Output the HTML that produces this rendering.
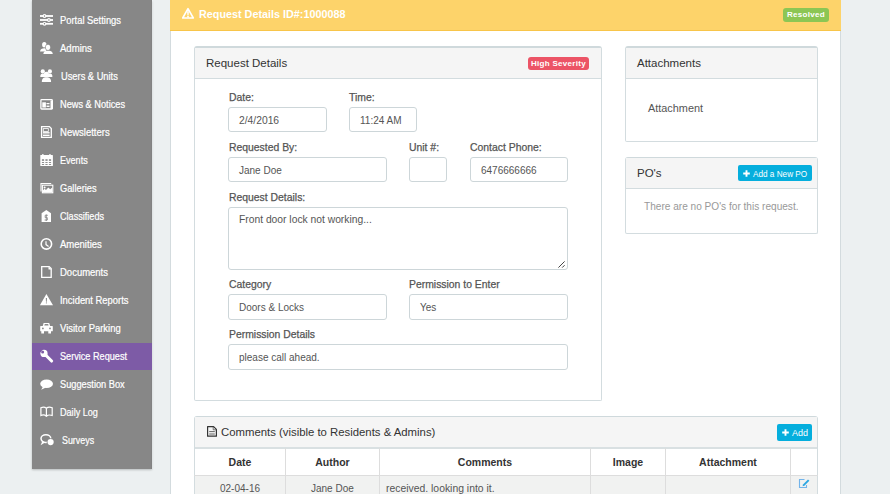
<!DOCTYPE html>
<html><head><meta charset="utf-8">
<style>
*{box-sizing:border-box;margin:0;padding:0}
html,body{width:890px;height:494px;overflow:hidden;background:#ecf0f1;font-family:"Liberation Sans",sans-serif;position:relative}
.sb{position:absolute;left:32px;top:0;width:120px;height:469px;background:#878787;box-shadow:0 1px 2px rgba(0,0,0,.22),1px 0 0 #f3f7f8,inset -1px 0 0 #828282}
.sb .ic{position:absolute;left:4px}
.sb .tx{position:absolute;left:28px;color:#fff;font-size:9.5px;line-height:12px;white-space:nowrap;-webkit-text-stroke:.2px #fff;transform:scaleY(1.08);transform-origin:0 79%}
.sb .act{position:absolute;left:0;width:120px;height:27px;background:#7d5ba6}
.main{position:absolute;left:170px;top:0;width:671px;height:494px;background:#fff;border-left:1px solid #d3dbde;border-right:1px solid #d3dbde}
.hdr{position:absolute;left:-1px;top:0;width:671px;height:31px;background:#fdd36a;border-bottom:1px solid #f8c54a}
.hdr .t{position:absolute;left:29px;top:6.5px;color:#fff;font-size:10.8px;font-weight:bold;line-height:14px;white-space:nowrap}
.badge{position:absolute;color:#fff;font-weight:bold;font-size:8px;letter-spacing:.3px;line-height:14px;text-align:center;border-radius:3px}
.panel{position:absolute;background:#fff;border:1px solid #d3dcdf;border-top:2px solid #cfd9dc;border-radius:3px 3px 2px 2px}
.ph{position:absolute;left:0;top:0;right:0;height:31px;background:#f5f5f5;border-bottom:1px solid #d3dcdf}
.ph .t{position:absolute;left:11px;top:9px;font-size:11.5px;color:#333;line-height:13px;white-space:nowrap}
.lbl{position:absolute;font-size:10.4px;color:#555;line-height:11px;white-space:nowrap;-webkit-text-stroke:.25px #555}
.inp{position:absolute;border:1px solid #cdd6d9;border-radius:3px;background:#fff;height:25px;font-size:10px;color:#555;line-height:23px;padding-left:10px;padding-top:1px;white-space:nowrap}
.btn{position:absolute;background:#05aedd;color:#fff;border-radius:2px;font-size:8.2px;line-height:17px;white-space:nowrap}
table{position:absolute;border-collapse:collapse}
td,th{border:1px solid #dde3e5;font-size:9.5px;color:#333;white-space:nowrap}
.th{position:absolute;height:28px;border-bottom:1px solid #dddddd;font-size:10.5px;font-weight:bold;color:#333;text-align:center;line-height:28px}
.trow{position:absolute;height:40px;background:#f1f2f1;border-top:1px solid #dddddd}
.vl{position:absolute;width:1px;height:60px;background:#dddddd}
.td{position:absolute;font-size:9.5px;color:#555;line-height:12px;white-space:nowrap}

</style></head><body>
<div class="sb">
<svg class="ic" style="top:10px" width="22" height="22" viewBox="0 0 22 22"><g stroke="#fff" stroke-width="1.8"><line x1="4" y1="6" x2="17" y2="6"/><line x1="4" y1="10" x2="17" y2="10"/><line x1="4" y1="13.8" x2="17" y2="13.8"/></g>
<g fill="#fff"><circle cx="8.5" cy="6" r="1.9"/><circle cx="12.9" cy="10" r="1.9"/><circle cx="8.5" cy="13.8" r="1.9"/></g>
<g fill="#777"><circle cx="8.5" cy="6" r=".7"/><circle cx="12.9" cy="10" r=".7"/><circle cx="8.5" cy="13.8" r=".7"/></g></svg>
<span class="tx" style="top:15px;left:28px;font-size:10px;transform:scale(0.938,1)">Portal Settings</span>
<svg class="ic" style="top:38px" width="22" height="22" viewBox="0 0 22 22"><g fill="#fff"><ellipse cx="8.3" cy="6.8" rx="2.2" ry="2.7"/><path d="M4 13.6 C4.3 11 6 10.2 8.3 10.2 C9.5 10.2 10.5 10.6 11 11.2 L9.5 13.6Z"/>
<ellipse cx="12" cy="9.3" rx="2.4" ry="2.9"/><path d="M7.3 15.9 C7.6 13.3 9.5 12.4 12 12.4 C14.5 12.4 16.4 13.3 16.8 15.9Z"/></g>
<g fill="none" stroke="#878787" stroke-width=".6"><ellipse cx="12" cy="9.3" rx="2.7" ry="3.2"/></g></svg>
<span class="tx" style="top:43px;left:28px;font-size:10px;transform:scale(0.955,1)">Admins</span>
<svg class="ic" style="top:66px" width="22" height="22" viewBox="0 0 22 22"><g fill="#fff"><circle cx="6.8" cy="5.4" r="2.1"/><circle cx="13.9" cy="5.4" r="2.1"/>
<path d="M4.3 11 C4.3 8.5 5.2 7.6 6.8 7.6 C8.4 7.6 9.3 8.5 9.3 11Z"/><path d="M11.4 11 C11.4 8.5 12.3 7.6 13.9 7.6 C15.5 7.6 16.4 8.5 16.4 11Z"/>
<circle cx="10.4" cy="8.4" r="2.6"/><path d="M5.8 16 C5.8 12.3 7.5 11.2 10.4 11.2 C13.3 11.2 15.1 12.3 15.1 16Z"/></g></svg>
<span class="tx" style="top:71px;left:29px;font-size:10px;transform:scale(0.930,1)">Users &amp; Units</span>
<svg class="ic" style="top:94px" width="22" height="22" viewBox="0 0 22 22"><g fill="none" stroke="#fff" stroke-width="1.3"><rect x="4.9" y="5.6" width="11.4" height="9.4" rx=".8"/></g>
<g fill="#fff"><rect x="14.5" y="6.5" width="2.4" height="8.6"/><rect x="6.3" y="8.3" width="3.6" height="5.2"/><rect x="10.5" y="9" width="3" height="1.2"/><rect x="10.5" y="11.6" width="3" height="1.4"/></g></svg>
<span class="tx" style="top:99px;left:28px;font-size:10px;transform:scale(0.922,1)">News &amp; Notices</span>
<svg class="ic" style="top:122px" width="22" height="22" viewBox="0 0 22 22"><g fill="none" stroke="#fff" stroke-width="1.3"><path d="M5.6 4.6 H13.4 L15.3 6.6 V15.4 H5.6Z"/><rect x="7.3" y="6.6" width="5" height="2.8" stroke-width=".8"/></g>
<g fill="#fff"><rect x="7" y="10.1" width="6.6" height="1.4"/><rect x="7" y="12.6" width="6.6" height="1.4"/></g></svg>
<span class="tx" style="top:127px;left:28px;font-size:10px;transform:scale(0.952,1)">Newsletters</span>
<svg class="ic" style="top:150px" width="22" height="22" viewBox="0 0 22 22"><g fill="#fff"><rect x="4.3" y="5" width="12.6" height="11" rx=".6"/><rect x="6.2" y="4" width="1.3" height="2"/><rect x="13.3" y="4" width="1.3" height="2"/></g>
<g fill="#8f8f8f"><rect x="5.9" y="9.2" width="2.2" height="1.7"/><rect x="9.4" y="9.2" width="2.2" height="1.7"/><rect x="12.9" y="9.2" width="2.2" height="1.7"/>
<rect x="5.9" y="12" width="2.2" height="1"/><rect x="9.4" y="12" width="2.2" height="1"/><rect x="12.9" y="12" width="2.2" height="1"/>
<rect x="5.9" y="14" width="2.2" height="1"/><rect x="9.4" y="14" width="2.2" height="1"/><rect x="12.9" y="14" width="2.2" height="1"/></g></svg>
<span class="tx" style="top:155px;left:28px;font-size:10px;transform:scale(0.905,1)">Events</span>
<svg class="ic" style="top:178px" width="22" height="22" viewBox="0 0 22 22"><g fill="none" stroke="#fff" stroke-width="1.1"><path d="M5 13.5 V5.5 H15.2"/><rect x="6.4" y="7.2" width="10.4" height="7.6"/></g>
<g fill="#fff"><circle cx="8.6" cy="9.4" r="1"/><path d="M6.8 14.5 L6.8 12.5 L8.5 10.8 L10 12 L12.3 9.5 L14.2 11.3 L16.3 9.5 V14.5Z"/></g></svg>
<span class="tx" style="top:183px;left:28px;font-size:10px;transform:scale(0.927,1)">Galleries</span>
<svg class="ic" style="top:206px" width="22" height="22" viewBox="0 0 22 22"><g fill="#fff"><path d="M5.6 15.9 V7.2 L10.3 3.9 L15 7.2 V15.9Z"/></g>
<g fill="none" stroke="#8a8a8a" stroke-width=".9"><path d="M11.8 9.3 H9.2 V11.6 H11.3 V14 H8.6"/><path d="M10.3 8.4 V15"/></g></svg>
<span class="tx" style="top:211px;left:28px;font-size:10px;transform:scale(0.911,1)">Classifieds</span>
<svg class="ic" style="top:234px" width="22" height="22" viewBox="0 0 22 22"><g fill="none" stroke="#fff"><circle cx="10.4" cy="9.9" r="5.2" stroke-width="1.6"/><path d="M10 7.2 V10.6 L12.6 12.4" stroke-width="1.2"/></g></svg>
<span class="tx" style="top:239px;left:28px;font-size:10px;transform:scale(0.952,1)">Amenities</span>
<svg class="ic" style="top:262px" width="22" height="22" viewBox="0 0 22 22"><g fill="none" stroke="#fff" stroke-width="1.3"><path d="M5.7 4.6 H13.2 L15.2 6.6 V15.3 H5.7Z"/></g><path d="M12.5 4.5 L15.5 7.5 L12.5 7.5Z" fill="#fff"/></svg>
<span class="tx" style="top:267px;left:28px;font-size:10px;transform:scale(0.949,1)">Documents</span>
<svg class="ic" style="top:290px" width="22" height="22" viewBox="0 0 22 22"><path d="M10.4 4 L17 15.3 H3.9Z" fill="#fff"/><g fill="#8a8a8a"><path d="M9.8 8 H11 L10.8 11.8 H10Z"/><rect x="9.9" y="12.4" width="1" height="1"/></g></svg>
<span class="tx" style="top:295px;left:28px;font-size:10px;transform:scale(0.941,1)">Incident Reports</span>
<svg class="ic" style="top:318px" width="22" height="22" viewBox="0 0 22 22"><g fill="#fff"><path d="M6.7 8.2 L7.6 5 H13.2 L14.2 8.2Z"/><rect x="4.2" y="8" width="12.6" height="5.3" rx=".6"/><rect x="5.3" y="13" width="2.7" height="2.5"/><rect x="12.3" y="13" width="2.7" height="2.5"/></g>
<g fill="#8a8a8a"><path d="M8.3 7.6 L8.8 6 H12.1 L12.6 7.6Z"/><circle cx="6.9" cy="10.4" r=".9"/><circle cx="14" cy="10.4" r=".9"/></g></svg>
<span class="tx" style="top:323px;left:28px;font-size:10px;transform:scale(0.944,1)">Visitor Parking</span>
<div class="act" style="top:343px"></div>
<svg class="ic" style="top:346px" width="22" height="22" viewBox="0 0 22 22"><g fill="#fff"><circle cx="8" cy="7.4" r="3.6"/></g><path d="M9.6 9 L15.6 15" stroke="#fff" stroke-width="3.1" stroke-linecap="round"/><g fill="#7d5ba6"><circle cx="6.6" cy="6" r="1.5"/><path d="M6 4.2 L4.6 2.6 L2.6 4.6 L4.4 6.2Z"/></g></svg>
<span class="tx" style="top:351px;left:28px;font-size:10px;transform:scale(0.913,1)">Service Request</span>
<svg class="ic" style="top:374px" width="22" height="22" viewBox="0 0 22 22"><g fill="#fff"><ellipse cx="10.6" cy="9.8" rx="6.4" ry="4.3"/><path d="M7 12.5 L5.2 15.7 L10 13.5Z"/></g></svg>
<span class="tx" style="top:379px;left:28px;font-size:10px;transform:scale(0.924,1)">Suggestion Box</span>
<svg class="ic" style="top:402px" width="22" height="22" viewBox="0 0 22 22"><g fill="none" stroke="#fff" stroke-width="1.2"><path d="M4.9 5.7 C6.8 4.8 9 5 10.4 6.2 C11.8 5 14 4.8 16.2 5.7 V13.5 C14 12.7 11.8 13 10.4 14.2 C9 13 6.8 12.7 4.9 13.5Z"/><path d="M10.4 6.2 V14.2"/></g></svg>
<span class="tx" style="top:407px;left:28px;font-size:10px;transform:scale(0.909,1)">Daily Log</span>
<svg class="ic" style="top:430px" width="22" height="22" viewBox="0 0 22 22"><g fill="none" stroke="#fff" stroke-width="1.5"><ellipse cx="9.9" cy="8.6" rx="4.9" ry="3.9"/></g><path d="M6.2 11.4 L4.6 15.2 L9 12.6Z" fill="#fff"/>
<circle cx="14.6" cy="12.1" r="3.9" fill="#878787"/><circle cx="14.6" cy="12.1" r="3.1" fill="#fff"/></svg>
<span class="tx" style="top:435px;left:30px;font-size:10px;transform:scale(0.889,1)">Surveys</span>
</div>
<div class="main">
  <div class="hdr">
    <svg style="position:absolute;left:12px;top:7px" width="13" height="13" viewBox="0 0 13 13"><path d="M6 1.6 L11.3 11 H0.7Z" fill="none" stroke="#fff" stroke-width="1.6" stroke-linejoin="round"/><path d="M5.1 4.3 H6.9 L6.6 8.4 H5.4Z" fill="#fff"/><rect x="5.2" y="9" width="1.6" height="1.4" fill="#fff"/></svg>
    <span class="t">Request Details ID#:1000088</span>
    <span class="badge" style="left:613px;top:8px;width:46px;height:14px;line-height:14px;background:#8cc654">Resolved</span>
  </div>
  <div class="panel" style="left:23px;top:46px;width:408px;height:355px">
    <div class="ph"><span class="t">Request Details</span>
      <span class="badge" style="left:333px;top:9px;width:61px;height:13px;line-height:13px;background:#ec5466">High Severity</span>
    </div>
  </div>
<span class="lbl" style="left:58px;top:92px;">Date:</span>
<span class="lbl" style="left:178px;top:92px;">Time:</span>
<div class="inp" style="left:57px;top:107px;width:99px;height:25px"><span style="font-size:10.3px">2/4/2016</span></div>
<div class="inp" style="left:178px;top:107px;width:68px;height:25px">11:24 AM</div>
<span class="lbl" style="left:58px;top:142px;">Requested By:</span>
<span class="lbl" style="left:238px;top:142px;">Unit #:</span>
<span class="lbl" style="left:299px;top:142px;">Contact Phone:</span>
<div class="inp" style="left:57px;top:157px;width:159px;height:25px">Jane Doe</div>
<div class="inp" style="left:238px;top:157px;width:38px;height:25px"></div>
<div class="inp" style="left:299px;top:157px;width:98px;height:25px">6476666666</div>
<span class="lbl" style="left:58px;top:192px;">Request Details:</span>
<div class="inp" style="left:57px;top:207px;width:340px;height:63px;line-height:14px;padding-top:5px;font-size:10.3px">Front door lock not working...<svg style="position:absolute;right:1px;bottom:1px" width="8" height="8" viewBox="0 0 8 8"><path d="M0.4 7.6 L6.6 1.4 M4.2 7.6 L6.6 5.2" stroke="#444" stroke-width="1"/></svg></div>
<span class="lbl" style="left:58px;top:279px;">Category</span>
<span class="lbl" style="left:238px;top:279px;">Permission to Enter</span>
<div class="inp" style="left:57px;top:294px;width:159px;height:26px">Doors &amp; Locks</div>
<div class="inp" style="left:238px;top:294px;width:159px;height:26px">Yes</div>
<span class="lbl" style="left:58px;top:329px;">Permission Details</span>
<div class="inp" style="left:57px;top:344px;width:340px;height:26px">please call ahead.</div>

  <div class="panel" style="left:454px;top:46px;width:193px;height:96px">
    <div class="ph"><span class="t">Attachments</span></div>
    <span class="td" style="left:22px;top:54px;font-size:10.9px">Attachment</span>
  </div>
  <div class="panel" style="left:454px;top:157px;width:193px;height:77px;border-top-width:1px">
    <div class="ph"><span class="t">PO's</span>
      <span class="btn" style="left:112px;top:7px;width:74px;height:16px;line-height:16px"><svg style="position:absolute;left:5px;top:5px" width="7" height="7" viewBox="0 0 7 7"><path d="M3.5 .2V6.8M.2 3.5H6.8" stroke="#fff" stroke-width="1.9"/></svg><span style="position:absolute;left:15px;top:2px">Add a New PO</span></span>
    </div>
    <span class="td" style="left:18px;top:43px;color:#999;font-size:10.1px">There are no PO's for this request.</span>
  </div>
  <div class="panel" style="left:23px;top:416px;width:624px;height:100px;border-top-width:1px">
    <div class="ph" style="height:32px;border-bottom:2px solid #d9e0e2"><span class="t" style="left:26px;font-size:11.35px">Comments (visible to Residents &amp; Admins)</span>
      <svg style="position:absolute;left:11px;top:8px" width="12" height="14" viewBox="0 0 12 14"><path d="M1.6 1.6 H7.6 L10.4 4.4 V11.2 H1.6Z" fill="none" stroke="#333" stroke-width="1.2" stroke-linejoin="round"/><rect x="3.2" y="6.1" width="5.6" height="1" fill="#666"/><rect x="3.2" y="8.5" width="5.6" height="1" fill="#666"/><path d="M7.2 1.8 V4.8 H10.2" fill="none" stroke="#555" stroke-width=".8"/></svg>
      <span class="btn" style="left:582px;top:7px;width:35px;height:17px;"><svg style="position:absolute;left:5px;top:5px" width="7" height="7" viewBox="0 0 7 7"><path d="M3.5 .2V6.8M.2 3.5H6.8" stroke="#fff" stroke-width="1.9"/></svg><span style="position:absolute;left:15px;top:1px;font-size:9px">Add</span></span>
    </div>
  </div>
<div class="th" style="left:23px;top:448px;width:92px">Date</div>
<div class="th" style="left:114px;top:448px;width:95px">Author</div>
<div class="th" style="left:208px;top:448px;width:212px">Comments</div>
<div class="th" style="left:419px;top:448px;width:76px">Image</div>
<div class="th" style="left:494px;top:448px;width:126px">Attachment</div>
<div class="th" style="left:619px;top:448px;width:28px"></div>
<div class="trow" style="left:24px;top:475px;width:622px"></div>
<div class="vl" style="left:114px;top:448px"></div>
<div class="vl" style="left:208px;top:448px"></div>
<div class="vl" style="left:419px;top:448px"></div>
<div class="vl" style="left:494px;top:448px"></div>
<div class="vl" style="left:619px;top:448px"></div>
<span class="td" style="left:49px;top:483px;font-size:10px">02-04-16</span>
<span class="td" style="left:140px;top:483px;font-size:10px">Jane Doe</span>
<span class="td" style="left:215px;top:483px;font-size:10.4px">received. looking into it.</span>
<svg style="position:absolute;left:627px;top:478px" width="12" height="11" viewBox="0 0 12 11"><path d="M6.5 1.5 H1.5 V9.5 H8.5 V7" fill="none" stroke="#73b4ea" stroke-width="1.1"/><path d="M4.6 8.2 L5 6.4 L10 1.4 L11.4 2.8 L6.4 7.8Z" fill="#2ba7e2"/></svg>

</div>
</body></html>
